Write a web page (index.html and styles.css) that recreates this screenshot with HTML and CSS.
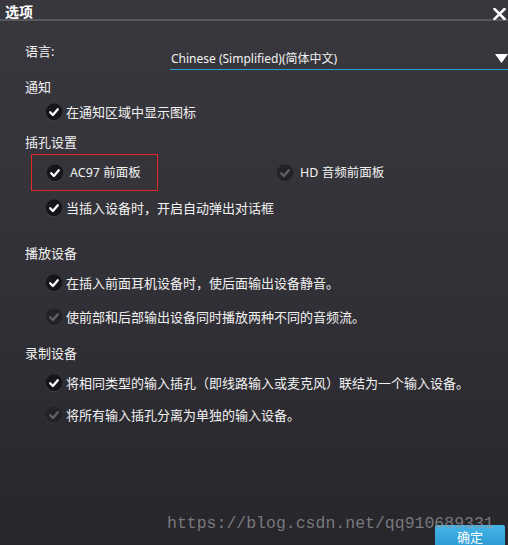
FILE: index.html
```html
<!DOCTYPE html>
<html lang="zh-CN">
<head>
<meta charset="utf-8">
<title>选项</title>
<link rel="stylesheet" href="styles.css">
</head>
<body>
<div class="dialog">
  <header class="titlebar">
    <span class="title">选项</span>
    <svg class="close" width="13" height="12" viewBox="0 0 13 12"><path d="M1.5 1 L11.5 11 M11.5 1 L1.5 11" stroke="#fff" stroke-width="2.6" stroke-linecap="square"/></svg>
  </header>

  <div class="content">
    <div class="lang-row">
      <span class="label">语言:</span>
      <div class="select">
        <span class="select-text">Chinese (Simplified)(简体中文)</span>
        <svg class="caret" width="13" height="9" viewBox="0 0 13 9"><path d="M0 0 H13 L6.5 9 Z" fill="#fff"/></svg>
      </div>
    </div>

    <div class="section s-notify">通知</div>
    <div class="option o1">
      <svg class="check" width="18" height="18" viewBox="0 0 18 18"><circle cx="9" cy="9.6" r="8.4" fill="#56555b"/><circle cx="9" cy="9" r="8.4" fill="#161519"/><path d="M5.2 9.3 L7.9 12 L12.8 6.3" fill="none" stroke="#fff" stroke-width="2.3" stroke-linecap="round" stroke-linejoin="round"/></svg>
      <span>在通知区域中显示图标</span>
    </div>

    <div class="section s-jack">插孔设置</div>
    <div class="jack-row">
      <div class="highlight">
        <div class="option">
          <svg class="check" width="18" height="18" viewBox="0 0 18 18"><circle cx="9" cy="9.6" r="8.4" fill="#56555b"/><circle cx="9" cy="9" r="8.4" fill="#161519"/><path d="M5.2 9.3 L7.9 12 L12.8 6.3" fill="none" stroke="#fff" stroke-width="2.3" stroke-linecap="round" stroke-linejoin="round"/></svg>
          <span class="spaced">AC97 前面板</span>
        </div>
      </div>
      <div class="option hd">
        <svg class="check" width="18" height="18" viewBox="0 0 18 18"><circle cx="9" cy="9.6" r="8.4" fill="#45444a"/><circle cx="9" cy="9" r="8.4" fill="#232226"/><path d="M5.2 9.3 L7.9 12 L12.8 6.3" fill="none" stroke="#626166" stroke-width="2.3" stroke-linecap="round" stroke-linejoin="round"/></svg>
        <span class="spaced">HD 音频前面板</span>
      </div>
    </div>
    <div class="option o-popup">
      <svg class="check" width="18" height="18" viewBox="0 0 18 18"><circle cx="9" cy="9.6" r="8.4" fill="#56555b"/><circle cx="9" cy="9" r="8.4" fill="#161519"/><path d="M5.2 9.3 L7.9 12 L12.8 6.3" fill="none" stroke="#fff" stroke-width="2.3" stroke-linecap="round" stroke-linejoin="round"/></svg>
      <span>当插入设备时，开启自动弹出对话框</span>
    </div>

    <div class="section s-play">播放设备</div>
    <div class="option o-play1">
      <svg class="check" width="18" height="18" viewBox="0 0 18 18"><circle cx="9" cy="9.6" r="8.4" fill="#56555b"/><circle cx="9" cy="9" r="8.4" fill="#161519"/><path d="M5.2 9.3 L7.9 12 L12.8 6.3" fill="none" stroke="#fff" stroke-width="2.3" stroke-linecap="round" stroke-linejoin="round"/></svg>
      <span>在插入前面耳机设备时，使后面输出设备静音。</span>
    </div>
    <div class="option o-play2">
      <svg class="check" width="18" height="18" viewBox="0 0 18 18"><circle cx="9" cy="9.6" r="8.4" fill="#45444a"/><circle cx="9" cy="9" r="8.4" fill="#232226"/><path d="M5.2 9.3 L7.9 12 L12.8 6.3" fill="none" stroke="#626166" stroke-width="2.3" stroke-linecap="round" stroke-linejoin="round"/></svg>
      <span>使前部和后部输出设备同时播放两种不同的音频流。</span>
    </div>

    <div class="section s-rec">录制设备</div>
    <div class="option o-rec1">
      <svg class="check" width="18" height="18" viewBox="0 0 18 18"><circle cx="9" cy="9.6" r="8.4" fill="#56555b"/><circle cx="9" cy="9" r="8.4" fill="#161519"/><path d="M5.2 9.3 L7.9 12 L12.8 6.3" fill="none" stroke="#fff" stroke-width="2.3" stroke-linecap="round" stroke-linejoin="round"/></svg>
      <span>将相同类型的输入插孔（即线路输入或麦克风）联结为一个输入设备。</span>
    </div>
    <div class="option o-rec2">
      <svg class="check" width="18" height="18" viewBox="0 0 18 18"><circle cx="9" cy="9.6" r="8.4" fill="#45444a"/><circle cx="9" cy="9" r="8.4" fill="#232226"/><path d="M5.2 9.3 L7.9 12 L12.8 6.3" fill="none" stroke="#626166" stroke-width="2.3" stroke-linecap="round" stroke-linejoin="round"/></svg>
      <span>将所有输入插孔分离为单独的输入设备。</span>
    </div>
  </div>

  <footer class="footer">
    <button class="ok">确定</button>
  </footer>

  <div class="watermark">https://blog.csdn.net/qq910689331</div>
</div>
</body>
</html>
```

FILE: styles.css
```css
html, body {
  margin: 0;
  padding: 0;
  background: #2f2e34;
}

.dialog {
  position: relative;
  width: 508px;
  height: 545px;
  overflow: hidden;
  display: flex;
  flex-direction: column;
  background: linear-gradient(to bottom, #38373d 0%, #36353b 25%, #302f35 60%, #27262b 100%);
  font-family: "Noto Sans", "Noto Sans CJK SC", sans-serif;
  font-size: 13px;
  color: #f2f2f2;
}

.titlebar {
  position: relative;
  height: 19px;
  border-bottom: 2px solid #58575d;
  box-sizing: content-box;
}

.title {
  display: block;
  padding-left: 5px;
  padding-top: 4px;
  line-height: 15px;
  font-family: "Noto Sans CJK SC", sans-serif;
  font-size: 14px;
  font-weight: 700;
  color: #ffffff;
}

.close {
  position: absolute;
  right: 2px;
  top: 8px;
}

.content {
  display: flex;
  flex-direction: column;
  padding-left: 25px;
}

.lang-row {
  display: flex;
  align-items: flex-start;
  margin-top: 20px;
}

.label {
  flex: 0 0 145px;
  line-height: 20px;
}

.select {
  flex: 1;
  display: flex;
  align-items: center;
  justify-content: space-between;
  margin-top: 8px;
  height: 20px;
  border-bottom: 1px solid #2a9ed8;
  padding-left: 1px;
}

.select-text {
  font-size: 12px;
  line-height: 20px;
}

.caret {
  margin-top: -2px;
}

.section {
  line-height: 20px;
  height: 20px;
}

.option {
  display: flex;
  align-items: center;
  gap: 3px;
  height: 20px;
  line-height: 20px;
  margin-left: 20px;
  white-space: nowrap;
}

.check {
  flex: 0 0 18px;
}

.spaced {
  padding-left: 3px;
  font-size: 12.5px;
}

.s-notify { margin-top: 7px; }
.o1 { margin-top: 5px; }
.s-jack { margin-top: 10px; }

.jack-row {
  display: flex;
  align-items: center;
  margin-top: 2px;
  margin-left: 6px;
}

.highlight {
  box-sizing: border-box;
  width: 127px;
  height: 37px;
  border: 1px solid #e3262a;
  display: flex;
  align-items: center;
  padding-left: 14px;
}

.highlight .option {
  margin-left: 0;
}

.hd {
  margin-left: 118px;
}

.o-popup { margin-top: 7px; }
.s-play { margin-top: 25px; }
.o-play1 { margin-top: 10px; }
.o-play2 { margin-top: 14px; }
.s-rec { margin-top: 16px; }
.o-rec1 { margin-top: 10px; }
.o-rec2 { margin-top: 12px; }

.footer {
  margin-top: auto;
  display: flex;
  justify-content: flex-end;
  padding-right: 3px;
}

.ok {
  width: 70px;
  height: 22px;
  margin-bottom: -2px;
  border: none;
  border-radius: 2px 2px 0 0;
  background: linear-gradient(to bottom, #45b4e6, #2c9bd4);
  color: #ffffff;
  font-family: "Noto Sans CJK SC", sans-serif;
  font-size: 13px;
  line-height: 20px;
  padding: 2px 0 0 0;
}

.watermark {
  position: absolute;
  left: 167px;
  top: 514px;
  font-family: "Liberation Mono", monospace;
  font-size: 16.5px;
  line-height: 20px;
  color: rgba(150, 149, 155, 0.75);
  white-space: nowrap;
}
```
